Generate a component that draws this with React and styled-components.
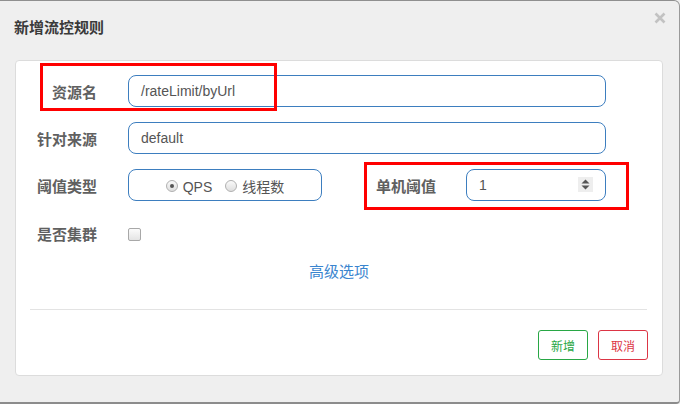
import React from "react";
import styled, { createGlobalStyle } from "styled-components";

const Global = createGlobalStyle`
  html, body {
    margin: 0;
    padding: 0;
    background: #efefef;
  }
  body {
    font-family: "Liberation Sans", "Noto Sans CJK SC", sans-serif;
    font-size: 14px;
    color: #555;
  }
`;

const Dialog = styled.div`
  position: relative;
  box-sizing: border-box;
  width: 680px;
  height: 404px;
  background: #efefef;
  border-top: 1px solid #8f8f8f;
  border-right: 1px solid #9a9a9a;
  border-bottom: 2px solid #8c8c8c;
  border-top-right-radius: 6px;
  border-bottom-right-radius: 4px;
  padding: 0 16px 0 15px;
  overflow: hidden;
`;

const Header = styled.div`
  height: 59px;
  display: flex;
  justify-content: space-between;
  align-items: flex-start;
  margin: 0 -3px 0 -1px;
`;

const Title = styled.div`
  margin-top: 17px;
  font-size: 15px;
  line-height: 20px;
  font-weight: bold;
  color: #3a3a3a;
`;

const Close = styled.button`
  margin-top: 11px;
  padding: 0;
  border: 0;
  background: none;
  cursor: pointer;
  width: 12px;
  height: 12px;
  display: flex;
`;

const Panel = styled.div`
  background: #fff;
  border: 1px solid #dcdcdc;
  border-radius: 4px;
  padding: 14px 0 15px;
`;

const Row = styled.div`
  display: flex;
  align-items: flex-start;
  height: 32px;
  margin-bottom: ${(p) => p.$mb ?? 15}px;
`;

const Label = styled.label`
  box-sizing: border-box;
  width: ${(p) => p.$w || 81}px;
  margin-left: ${(p) => p.$ml || 0}px;
  margin-right: ${(p) => p.$mr || 31}px;
  padding-top: ${(p) => p.$pt || 8}px;
  text-align: right;
  font-size: 15px;
  line-height: 20px;
  font-weight: bold;
  color: #606060;
  white-space: nowrap;
`;

const Input = styled.div`
  box-sizing: border-box;
  width: ${(p) => p.$w}px;
  height: 32px;
  border: 1px solid #3d7ebf;
  border-radius: 8px;
  padding: 0 12px 0 12px;
  display: flex;
  align-items: center;
  justify-content: ${(p) => (p.$center ? "center" : "flex-start")};
  font-size: 14px;
  color: #555;
`;

const Spinner = styled.span`
  margin-left: auto;
  width: 15px;
  height: 15px;
  margin-top: -1px;
  background: #eeeeee;
  display: flex;
  align-items: center;
  justify-content: center;
`;

const Radio = styled.span`
  box-sizing: border-box;
  width: 12px;
  height: 12px;
  border-radius: 50%;
  border: 1px solid #b0b0b0;
  background: linear-gradient(#fafafa, #dedede);
  display: inline-flex;
  align-items: center;
  justify-content: center;
  margin-right: 5px;
  margin-top: 2px;

  &::after {
    content: "";
    display: ${(p) => (p.$checked ? "block" : "none")};
    width: 4px;
    height: 4px;
    border-radius: 50%;
    background: #555;
  }
`;

const RadioText = styled.span`
  margin-right: ${(p) => p.$mr || 0}px;
  line-height: 20px;
  padding-top: 3px;
  color: #555;
`;

const Checkbox = styled.span`
  box-sizing: border-box;
  width: 13px;
  height: 13px;
  margin-top: 12px;
  border: 1px solid #a8a8a8;
  border-radius: 2px;
  background: linear-gradient(#fbfbfb, #e4e4e4);
`;

const More = styled.a`
  display: block;
  text-align: center;
  margin-top: 14px;
  font-size: 15px;
  line-height: 20px;
  color: #3a85cf;
  text-decoration: none;
  cursor: pointer;
`;

const Divider = styled.hr`
  margin: 27px 15px 0 14px;
  border: 0;
  border-top: 1px solid #e3e3e3;
`;

const Footer = styled.div`
  display: flex;
  justify-content: flex-end;
  gap: 10px;
  margin: 20px 14px 0 0;
`;

const Button = styled.button`
  box-sizing: border-box;
  width: 50px;
  height: 30px;
  background: #fff;
  border: 1px solid ${(p) => p.$color};
  color: ${(p) => p.$color};
  border-radius: 3px;
  font-family: "Noto Sans CJK SC", sans-serif;
  font-size: 12px;
  padding: 0;
  cursor: pointer;
`;

const Mark = styled.div`
  position: absolute;
  left: ${(p) => p.$x}px;
  top: ${(p) => p.$y}px;
  width: ${(p) => p.$w}px;
  height: ${(p) => p.$h}px;
  box-sizing: border-box;
  border: 3px solid #ff0000;
  pointer-events: none;
`;

export default function App() {
  return (
    <>
      <Global />
      <Dialog>
        <Header>
          <Title>新增流控规则</Title>
          <Close aria-label="close">
            <svg width="12" height="12" viewBox="0 0 12 12">
              <path d="M1.5 1.5 L10.5 10.5 M10.5 1.5 L1.5 10.5" stroke="#c2c2c2" strokeWidth="2.6" />
            </svg>
          </Close>
        </Header>
        <Panel>
          <Row>
            <Label>资源名</Label>
            <Input $w={478}>/rateLimit/byUrl</Input>
          </Row>
          <Row>
            <Label>针对来源</Label>
            <Input $w={478}>default</Input>
          </Row>
          <Row>
            <Label>阈值类型</Label>
            <Input $w={194} $center>
              <Radio $checked />
              <RadioText $mr={13}>QPS</RadioText>
              <Radio />
              <RadioText>线程数</RadioText>
            </Input>
            <Label $w={61} $ml={53} $mr={30}>单机阈值</Label>
            <Input $w={140}>
              1
              <Spinner>
                <svg width="9" height="11" viewBox="0 0 9 11">
                  <path d="M4.5 0.5 L8.5 4.5 L0.5 4.5 Z M0.5 6.5 L8.5 6.5 L4.5 10.5 Z" fill="#555" />
                </svg>
              </Spinner>
            </Input>
          </Row>
          <Row $mb={0}>
            <Label $pt={9}>是否集群</Label>
            <Checkbox />
          </Row>
          <More>高级选项</More>
          <Divider />
          <Footer>
            <Button $color="#28a745">新增</Button>
            <Button $color="#dc3545">取消</Button>
          </Footer>
        </Panel>
        <Mark $x={40} $y={62} $w={237} $h={48} />
        <Mark $x={364} $y={161} $w={265} $h={48} />
      </Dialog>
    </>
  );
}
